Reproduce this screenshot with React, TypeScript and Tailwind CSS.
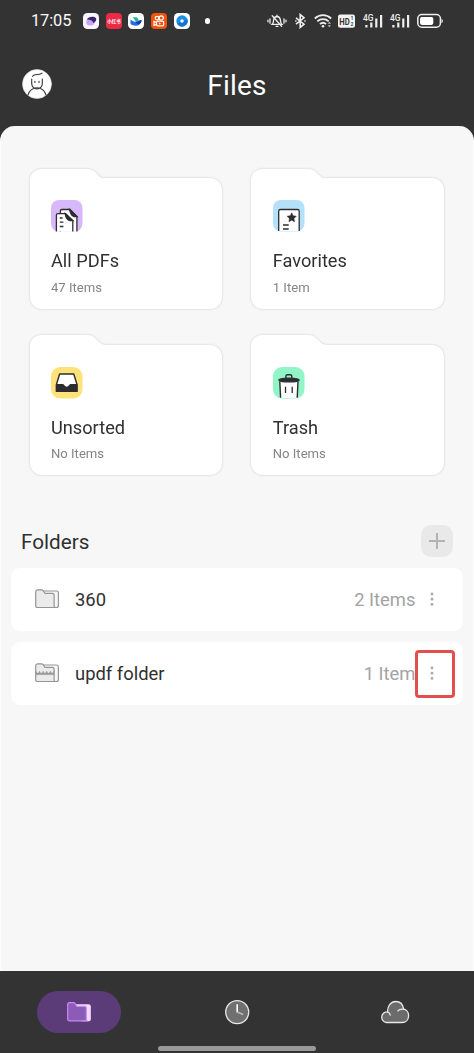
import React from 'react';

type FolderKind = 'pdfs' | 'favorites' | 'unsorted' | 'trash';

interface FolderCardProps {
  kind: FolderKind;
  title: string;
  count: string;
}

const INK = '#2d2d30';

const StatusBar: React.FC = () => (
  <div className="flex h-[42px] items-center pl-[31px] text-white">
    <span className="w-[52px] pt-px text-[16.4px] leading-none tracking-[-0.1px] text-gray-50">17:05</span>
    <div className="flex items-center gap-[6.7px]">
      <svg className="size-4" viewBox="0 0 16 16">
        <rect width="16" height="16" rx="4.5" fill="#f8f5ff" />
        <ellipse cx="7.4" cy="9" rx="4.2" ry="3.6" fill="#c9a5f3" />
        <path d="M4 6.5C5 3.5 11 2.8 13 5.2c.8 1.8-.8 4.2-2.6 4.8C10 8 7.500 6.500 4 6.500Z" fill="#38246b" />
      </svg>
      <svg className="size-4" viewBox="0 0 16 16">
        <rect width="16" height="16" rx="4" fill="#ee2946" />
        <text x="8" y="9.900" textAnchor="middle" fontSize="4.500" fontWeight="700" fill="#fff" fontFamily="Noto Sans CJK SC, sans-serif">小红书</text>
      </svg>
      <svg className="size-4" viewBox="0 0 16 16">
        <rect width="16" height="16" rx="4.5" fill="#fff" />
        <path d="M4.500 4.200h4.200c1.200 1 1.800 2 2 3.400L8 9.200C7 7.200 6 5.600 4.500 4.200Z" fill="#20b795" />
        <path d="M2.500 6.200C5.500 9 8 9.400 10 8c1.300-.9 2.600-1 3.800-.6-1 3.500-3.100 5.300-6 5.300-2.200 0-4-.7-5.300-1.700Z" fill="#266bea" />
        <path d="M7.500 9.200c1 .1 1.800-.2 2.600-.8 1.200-1 2.400-1.200 3.700-1-.7 2-1.700 3.200-3 3.800-1.300-.4-2.400-1-3.300-2Z" fill="#173c9c" />
      </svg>
      <svg className="size-4" viewBox="0 0 16 16" fill="none" stroke="#fff" strokeWidth="1.2">
        <rect width="16" height="16" rx="4" fill="#f4510b" stroke="none" />
        <circle cx="6" cy="5.100" r="1.800" />
        <circle cx="10.200" cy="4.900" r="2.100" />
        <rect x="5.500" y="8.100" width="7.200" height="4.800" rx="1.400" />
        <path d="M5.500 9.500 3 8.400v4l2.500-1" />
        <path d="M8.300 9.800v1.400l1.200-.7Z" fill="#fff" strokeWidth=".5" />
      </svg>
      <svg className="size-4" viewBox="0 0 16 16">
        <rect width="16" height="16" rx="4.5" fill="#fff" />
        <circle cx="8" cy="8" r="5.700" fill="#1c8fe4" />
        <path d="M3 10.500A5.700 5.700 0 0 0 13.400 6L10 8l-3 1Z" fill="#1674cf" />
        <circle cx="8" cy="8" r="1.700" fill="#fff" />
      </svg>
    </div>
    <span className="ml-[15px] size-[5.5px] rounded-full bg-white" />

    <svg className="ml-[57px] h-4 w-5" viewBox="0 0 20 16" fill="none" stroke="#eee" strokeWidth="1.3" strokeLinecap="round">
      <path d="M5.200 11.300h9.600c-1.400-1.200-1.100-2.500-1.400-4.500C13 4.600 11.900 3.600 10 3.500 8.100 3.600 7 4.600 6.600 6.800c-.3 2 0 3.300-1.400 4.500Z" />
      <path d="M10 2.200v1M9 13.300h2M5.200 2.800l9.400 10.400M3 5.800v4.400M17 5.800v4.400M1 7.200v1.600M19 7.200v1.600" />
    </svg>
    <svg className="ml-[7.5px] h-4 w-[11px]" viewBox="0 0 11 16" fill="none" stroke="#eee" strokeWidth="1.6">
      <path d="m1 4.800 8 6.400-3.800 3.200V1.600L9 4.800l-8 6.400" />
      <path d="M.2 8h1.300M9.300 8h1.300" />
    </svg>
    <svg className="ml-[8px] h-4 w-[19px]" viewBox="0 0 19 16" fill="none" stroke="#eee" strokeWidth="1.8">
      <path d="M.8 5.500c4.700-4.400 11.700-4.400 16.400 0M3.300 8.400c3.300-3 8.100-3 11.400 0M5.900 11.100c1.800-1.600 4.400-1.600 6.200 0" />
      <circle cx="9" cy="13.300" r="1.300" fill="#eee" stroke="none" />
      <path d="m13.600 10.800 1.700-2 1.700 2ZM13.600 12.200l1.700 2 1.700-2Z" fill="#bbb" stroke="none" />
    </svg>
    <svg className="ml-[5.5px] h-4 w-[17px]" viewBox="0 0 17 16">
      <rect y="1.500" width="17" height="13.300" rx="2.200" fill="#f4f4f4" />
      <text x="1.300" y="11.700" fontSize="9.500" fontWeight="700" fill="#333" textLength="10.400" lengthAdjust="spacingAndGlyphs">HD</text>
      <text x="12.800" y="7.300" fontSize="4.500" fontWeight="700" fill="#333">1</text>
      <text x="12.700" y="12.900" fontSize="4.500" fontWeight="700" fill="#333">2</text>
    </svg>
    {[0, 1].map((sim) => (
      <svg key={sim} className="ml-[7.5px] h-4 w-5 overflow-visible" viewBox="0 0 20 16" fill="#eee">
        <text x="0" y="7.600" fontSize="9" fontWeight="500" textLength="10.500" lengthAdjust="spacingAndGlyphs">4G</text>
        <path d="M2.300 12h2.200v2.500H2.300zM7.200 9.500h2.200v5H7.200zM12.200 5.500h2.200v9h-2.200zM17 2h2.200v12.500H17z" />
      </svg>
    ))}
    <svg className="ml-[6.5px] h-4 w-[27px]" viewBox="0 0 27 16">
      <rect x=".8" y="1.600" width="22.600" height="12.600" rx="4" fill="none" stroke="#eee" strokeWidth="1.500" />
      <rect x="3" y="3.900" width="13.300" height="8" rx="1.800" fill="#fff" />
      <path d="M24.500 6c1.800.5 1.800 3.500 0 4Z" fill="#eee" />
    </svg>
  </div>
);

const Avatar: React.FC = () => (
  <svg className="-mt-px size-[30px]" viewBox="0 0 30 30" fill="none" stroke="#333" strokeWidth="1.1" strokeLinecap="round">
    <circle cx="15" cy="15" r="14.500" fill="#fff" stroke="#ddd" strokeWidth=".6" />
    <path d="M9.700 10v4.500a5.300 5.500 0 0 0 10.600 0V10M10.500 7.300c1.200-1.700 2.300-1.800 4.500-1.800s3.500-.2 5-1.400M12.900 12.200v1.200M17 12.200v1.200M6 26c.9-4.200 4.700-7.200 9-7.200s8.100 3 9 7.200" />
  </svg>
);

const CardIcon: React.FC<{ kind: FolderKind }> = ({ kind }) => {
  switch (kind) {
    case 'pdfs':
      return (
        <svg className="size-8" viewBox="0 0 32 32" fill="#fff" stroke={INK} strokeWidth="1.3">
          <rect width="31.500" height="31.500" rx="8" fill="#d6b8fb" stroke="none" />
          <path d="M9.400 31.500V11q0-1.500 1.500-1.500H19l6.900 7v15" />
          <path d="M18.600 9.500 25.900 16.500h-2.800c-2.300-.5-3.800-2.500-4.500-7Z" fill={INK} />
          <path d="M5.400 31.500V15.200q0-1.500 1.500-1.500h7.700l7.200 7v10.800" />
          <path d="M14.200 13.700 21.800 20.700h-2.800c-2.300-.5-4.100-2.500-4.800-7Z" fill={INK} />
          <path d="M8.800 18h2.800M8.800 22.200h3.600M8.800 26.500h3.600" />
        </svg>
      );
    case 'favorites':
      return (
        <svg className="size-8" viewBox="0 0 32 32" fill="#fff" stroke={INK} strokeWidth="1.3">
          <rect width="31.500" height="31.500" rx="8" fill="#b5e0fa" stroke="none" />
          <path d="M5.700 31V11.200q0-1.700 1.700-1.700h17.100q1.700 0 1.700 1.700V31" />
          <path d="m18.700 12.800 1.400 2.900 3.200.5-2.300 2.300.5 3.200-2.800-1.500-2.800 1.500.5-3.200-2.300-2.300 3.200-.5Z" fill={INK} strokeWidth=".5" />
          <path d="M10 25h5.700M10 29h5.700" />
        </svg>
      );
    case 'unsorted':
      return (
        <svg className="size-8" viewBox="0 0 32 32" fill="#fff" stroke={INK} strokeWidth="1.4" strokeLinejoin="round">
          <rect width="31.500" height="31.500" rx="9" fill="#ffe37a" stroke="none" />
          <path d="M8.600 7h14.200l3.100 10.200v7.200H5.500v-7.200Z" />
          <path d="M5.500 17.800h6.200c1.200 0 1.300 2.600 4 2.600s2.800-2.600 4-2.600h6.200v6.600H5.500Z" fill={INK} />
        </svg>
      );
    case 'trash':
      return (
        <svg className="size-8" viewBox="0 0 32 32" fill="#fff" stroke={INK} strokeWidth="1.4">
          <rect width="31.500" height="31.500" rx="9" fill="#91f5c8" stroke="none" />
          <path d="M6.800 14.500 7.600 31h16.700l.8-16.500Z" stroke="none" />
          <path d="m6.800 14.500.8 16.300M25 14.500l-.8 16.300" />
          <path d="M12.900 11.500V9.300q0-1.500 1.500-1.500h2.900q1.500 0 1.500 1.500v2.200" fill="none" />
          <ellipse cx="16" cy="13" rx="10.100" ry="1.900" fill={INK} />
          <path d="M12.500 19.700v6.300M19.200 19.700v6.300" strokeWidth="1.3" />
        </svg>
      );
  }
};

const FolderCard: React.FC<FolderCardProps> = ({ kind, title, count }) => (
  <div className="flex h-[140px] flex-col drop-shadow-[0_0.8px_1.2px_rgba(0,0,0,0.18)]">
    <svg className="h-[9.5px] w-[76px] shrink-0" viewBox="0 0 76 9.5" fill="#fff">
      <path d="M0 10C.8 4 5.500 0 11.500 0H57c4.500 0 6.800 1.600 9.300 4.200C69.200 7.200 71 9.500 75 9.500V10Z" />
    </svg>
    <div className="flex-1 rounded-xl rounded-tl-none bg-white pt-[22px] pl-[21.5px]">
      <CardIcon kind={kind} />
      <p className="mt-[17px] text-[18.2px] leading-6 text-[#303030]">{title}</p>
      <p className="mt-[5.5px] text-[13.1px] leading-[18px] text-[#858585]">{count}</p>
    </div>
  </div>
);

const SmallFolder: React.FC<{ zipped?: boolean }> = ({ zipped }) => (
  <svg className="h-5 w-6" viewBox="0 0 24 20" fill="#ebebeb" stroke="#959595" strokeWidth="1.2" strokeLinejoin="round">
    <path d="M7 2h14.500Q23.400 2 23.400 4v12.500q0 2-1.900 2H16Z" fill="#f8f8f8" />
    <path d="M.7 2.700Q.7.800 2.500.8h4Q7.500.8 8.200 1.700l1.600 2.600h7.700q1.600 0 1.600 1.700v10.800q0 1.700 1.200 1.700H2.500q-1.800 0-1.800-1.800Z" />
    {zipped && (
      <path d="M.9 8.300v3.300h18V8.300q-.3 2-1.800 2t-1.800-2q-.3 2-1.800 2t-1.800-2q-.3 2-1.800 2t-1.800-2q-.3 2-1.800 2t-1.800-2q-.3 2-1.800 2t-1.800-2Z" fill="#999" strokeWidth=".6" />
    )}
  </svg>
);

const FolderRow: React.FC<{ name: string; count: string; zipped?: boolean; highlighted?: boolean }> = ({
  name,
  count,
  zipped,
  highlighted,
}) => (
  <div className="relative flex h-[63px] items-center rounded-[9px] bg-white pl-[24.5px] text-[18.4px] leading-6">
    <SmallFolder zipped={zipped} />
    <span className="ml-4 flex-1 pt-px text-[#303030]">{name}</span>
    <span className="pt-px text-[#a3a3a3]">{count}</span>
    <button className="mr-[27.5px] ml-[13px] grid h-5 w-[7px] place-items-center">
      <svg className="h-[15px] w-1" viewBox="0 0 4 15" fill="#aaa">
        <circle cx="2" cy="2" r="1.400" />
        <circle cx="2" cy="7.200" r="1.400" />
        <circle cx="2" cy="12.400" r="1.400" />
      </svg>
    </button>
    {highlighted && (
      <span className="absolute top-[8px] right-[8px] h-[48px] w-[40px] rounded-[4px] border-3 border-[#e34f4f]" />
    )}
  </div>
);

const TabBar: React.FC = () => (
  <nav className="flex h-[82px] flex-col bg-[#333]">
    <div className="grid grid-cols-3 place-items-center pt-5">
      <button className="grid h-[42px] w-[84px] place-items-center rounded-full bg-[#5c3b79]">
        <svg className="h-5 w-6" viewBox="0 0 24 20" strokeLinejoin="round">
          <path d="M8 2.300h13.500Q23.800 2.300 23.800 4.300v13q0 2-1.900 2H15Z" fill="#f3d9ff" />
          <path d="M.7 2.500Q.7.700 2.500.7h4Q7.500.7 8.200 1.700l1.600 2.600h7.700q1.800 0 1.800 1.700v11.500q0 1.300.8 1.300H2.500q-1.800 0-1.800-1.800Z" fill="#8b5bb7" stroke="#c58df0" strokeWidth="1.2" />
        </svg>
      </button>
      <svg className="size-[25px]" viewBox="0 0 25 25" fill="none">
        <circle cx="12.200" cy="12.200" r="11.500" fill="#707070" stroke="#e8e8e8" strokeWidth="1.300" />
        <path d="M12.200 4.200v8.200" stroke="#fff" strokeWidth="1.600" />
        <path d="m12.200 12.100 6 2.500" stroke="#bbb" strokeWidth="1.600" />
      </svg>
      <svg className="h-6 w-[30px]" viewBox="0 0 30 24" fill="none" stroke="#e8e8e8" strokeWidth="1.300" strokeLinecap="round">
        <path d="M6.500 22.500a5.200 5.200 0 0 1 1.100-10.600C7.200 6.300 10.700 1.500 15.800 1.500c4.200 0 7.200 3.200 7.900 7.700 2.900.5 4.900 3.200 4.900 6.200 0 4.100-2.600 7.100-6.600 7.100Z" fill="#6b6b6b" />
        <path d="M7.600 11.900c1.500.5 2.400 1.700 2.700 3.300M23.700 9.200c-2.400-.3-4.500.1-5.900 1.700" />
      </svg>
    </div>
    <div className="mx-auto mt-[13px] h-[4.5px] w-[158px] shrink-0 rounded-full bg-[#999]" />
  </nav>
);

export default function App() {
  return (
    <div className="flex h-[1053px] w-[474px] flex-col overflow-hidden bg-[#333] font-['Roboto',sans-serif]">
      <header className="h-[126px]">
        <StatusBar />
        <div className="grid h-[85px] grid-cols-3 items-center px-[22px]">
          <Avatar />
          <h1 className="pt-[3px] text-center text-[28px] leading-8 tracking-[0.2px] text-white">Files</h1>
        </div>
      </header>

      <main className="h-[845px] rounded-t-[15px] border-x border-[#fdfdfd] bg-[#f7f7f7] pt-[42.5px]">
        <div className="grid grid-cols-2 gap-x-[29.5px] gap-y-[26.5px] pr-[29.5px] pl-[28.5px]">
          <FolderCard kind="pdfs" title="All PDFs" count="47 Items" />
          <FolderCard kind="favorites" title="Favorites" count="1 Item" />
          <FolderCard kind="unsorted" title="Unsorted" count="No Items" />
          <FolderCard kind="trash" title="Trash" count="No Items" />
        </div>

        <div className="mt-[50px] flex h-8 items-center justify-between pr-5 pl-5">
          <h2 className="pt-px text-[20.7px] leading-7 text-[#303030]">Folders</h2>
          <button className="grid size-8 place-items-center rounded-[10px] bg-[#e9e9e9]">
            <svg className="size-4" viewBox="0 0 16 16" stroke="#b3b3b3" strokeWidth="2">
              <path d="M8 0v16M0 8h16" />
            </svg>
          </button>
        </div>

        <div className="mt-[10.5px] flex flex-col gap-[11px] pr-[10px] pl-[9.5px]">
          <FolderRow name="360" count="2 Items" />
          <FolderRow name="updf folder" count="1 Item" zipped highlighted />
        </div>
      </main>

      <TabBar />
    </div>
  );
}
